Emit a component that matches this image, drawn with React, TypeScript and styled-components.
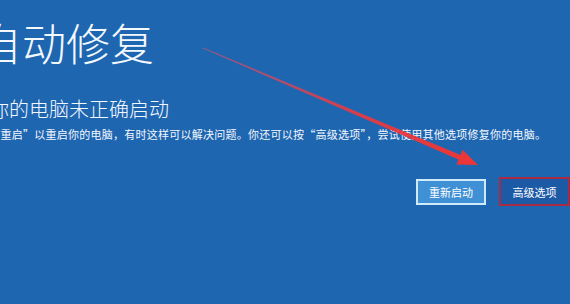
import styled, { createGlobalStyle } from "styled-components";

const Global = createGlobalStyle`
  html, body {
    margin: 0;
    padding: 0;
    background: #1f66b1;
  }
  body {
    font-family: "Noto Sans CJK SC", "Noto Sans", sans-serif;
  }
`;

const Screen = styled.div`
  position: relative;
  width: 570px;
  height: 304px;
  overflow: hidden;
  background: #1f66b1;
  color: #f3f8fd;
`;

const Content = styled.div`
  display: flex;
  flex-direction: column;
  padding-top: 18px;
`;

const Title = styled.h1`
  margin: 0 0 0 -22px;
  font-size: 44px;
  line-height: 48px;
  font-weight: 300;
  white-space: nowrap;
`;

const Heading = styled.h2`
  margin: 31px 0 0 -11px;
  font-size: 20px;
  line-height: 24px;
  font-weight: 300;
  white-space: nowrap;
`;

const Message = styled.p`
  margin: 5px 0 0 -22px;
  font-size: 11px;
  line-height: 16px;
  letter-spacing: 0.25px;
  white-space: nowrap;
`;

const Actions = styled.div`
  display: flex;
  justify-content: flex-end;
  align-items: center;
  gap: 13px;
  margin-top: 35px;
`;

const Button = styled.div<{ $variant: "primary" | "marked" }>`
  display: flex;
  align-items: center;
  justify-content: center;
  box-sizing: border-box;
  width: ${(p) => (p.$variant === "primary" ? "70px" : "71px")};
  height: ${(p) => (p.$variant === "primary" ? "26px" : "29px")};
  font-size: 11px;
  color: #ffffff;
  background: ${(p) => (p.$variant === "primary" ? "#3f90d4" : "#1d5aa6")};
  border: 2px solid ${(p) => (p.$variant === "primary" ? "#cfeafa" : "#a82a45")};
`;

const Overlay = styled.svg`
  position: absolute;
  left: 0;
  top: 0;
  pointer-events: none;
`;

export default function App() {
  return (
    <Screen>
      <Global />
      <Content>
        <Title>自动修复</Title>
        <Heading>你的电脑未正确启动</Heading>
        <Message>
          按“重启”以重启你的电脑，有时这样可以解决问题。你还可以按“高级选项”，尝试使用其他选项修复你的电脑。
        </Message>
        <Actions>
          <Button $variant="primary">重新启动</Button>
          <Button $variant="marked">高级选项</Button>
        </Actions>
      </Content>
      <Overlay width="570" height="304" viewBox="0 0 570 304">
        <defs>
          <linearGradient id="arrowFade" x1="203" y1="48" x2="478" y2="165" gradientUnits="userSpaceOnUse">
            <stop offset="0" stopColor="#e0506a" stopOpacity="0.55" />
            <stop offset="0.5" stopColor="#e83a42" stopOpacity="0.9" />
            <stop offset="1" stopColor="#ee3535" />
          </linearGradient>
        </defs>
        <polygon
          points="202.8,48.5 458.6,159.5 456.5,164.6 478,165 462.7,149.8 460.6,154.9 203.2,47.5"
          fill="url(#arrowFade)"
        />
      </Overlay>
    </Screen>
  );
}
